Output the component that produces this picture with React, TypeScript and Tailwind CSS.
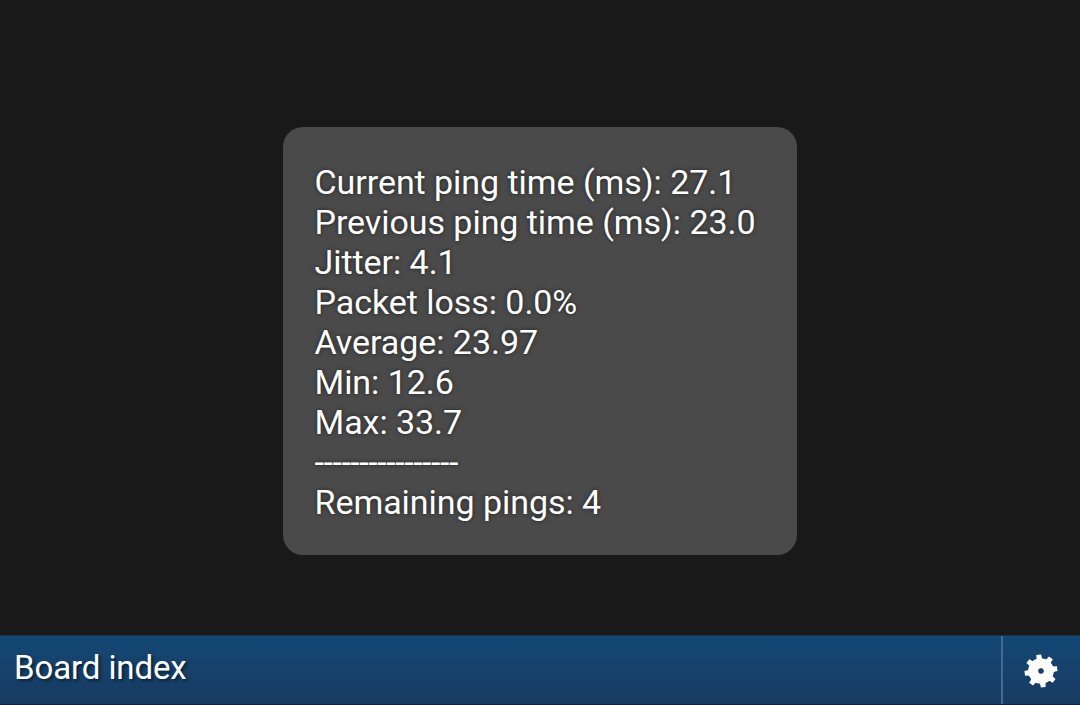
const stats = [
  { label: "Current ping time (ms)", value: "27.1" },
  { label: "Previous ping time (ms)", value: "23.0" },
  { label: "Jitter", value: "4.1" },
  { label: "Packet loss", value: "0.0%" },
  { label: "Average", value: "23.97" },
  { label: "Min", value: "12.6" },
  { label: "Max", value: "33.7" },
];

const teeth = [0, 45, 90, 135, 180, 225, 270, 315];

function GearIcon() {
  return (
    <svg width="34" height="34" viewBox="-17 -17 34 34" fill="white">
      <g transform="rotate(-8)">
        {teeth.map((angle) => (
          <path key={angle} d="M-2.9 -11 L-2.4 -16.4 H2.4 L2.9 -11 Z" transform={`rotate(${angle})`} />
        ))}
        <path
          fillRule="evenodd"
          d="M0 -12.8 A12.8 12.8 0 1 1 0 12.8 A12.8 12.8 0 1 1 0 -12.8 Z M0 -2.8 A2.8 2.8 0 1 0 0 2.8 A2.8 2.8 0 1 0 0 -2.8 Z"
        />
      </g>
    </svg>
  );
}

export default function App() {
  return (
    <div className="flex h-screen flex-col overflow-hidden bg-[#191919] font-[Roboto,sans-serif] text-white">
      <main className="flex flex-1 items-start justify-center pt-[126.5px]">
        <div className="h-[428px] w-[514px] rounded-[20px] bg-[#4a4a4a] px-[31.5px] pt-[35.5px] text-[34px] leading-10 tracking-[-0.05px] whitespace-nowrap [text-shadow:0_0_4px_rgba(0,0,0,0.6)]">
          {stats.map((stat) => (
            <p key={stat.label}>
              {stat.label}: {stat.value}
            </p>
          ))}
          <p className="tracking-[-0.43px]">----------------</p>
          <p>Remaining pings: 4</p>
        </div>
      </main>
      <footer className="flex h-[70px] border-t border-b border-t-[#17344c] border-b-[#10263d] bg-linear-to-b from-[#134874] to-[#183a62]">
        <div className="flex-1 pt-3 pl-[14px] text-[33px] leading-10 tracking-[-0.1px] [text-shadow:2px_2px_3px_rgba(0,0,0,0.5)]">
          Board index
        </div>
        <button className="flex w-[79px] items-center justify-center border-l-2 border-[#426b8f] pt-px pr-[2px]" aria-label="Settings">
          <GearIcon />
        </button>
      </footer>
    </div>
  );
}
